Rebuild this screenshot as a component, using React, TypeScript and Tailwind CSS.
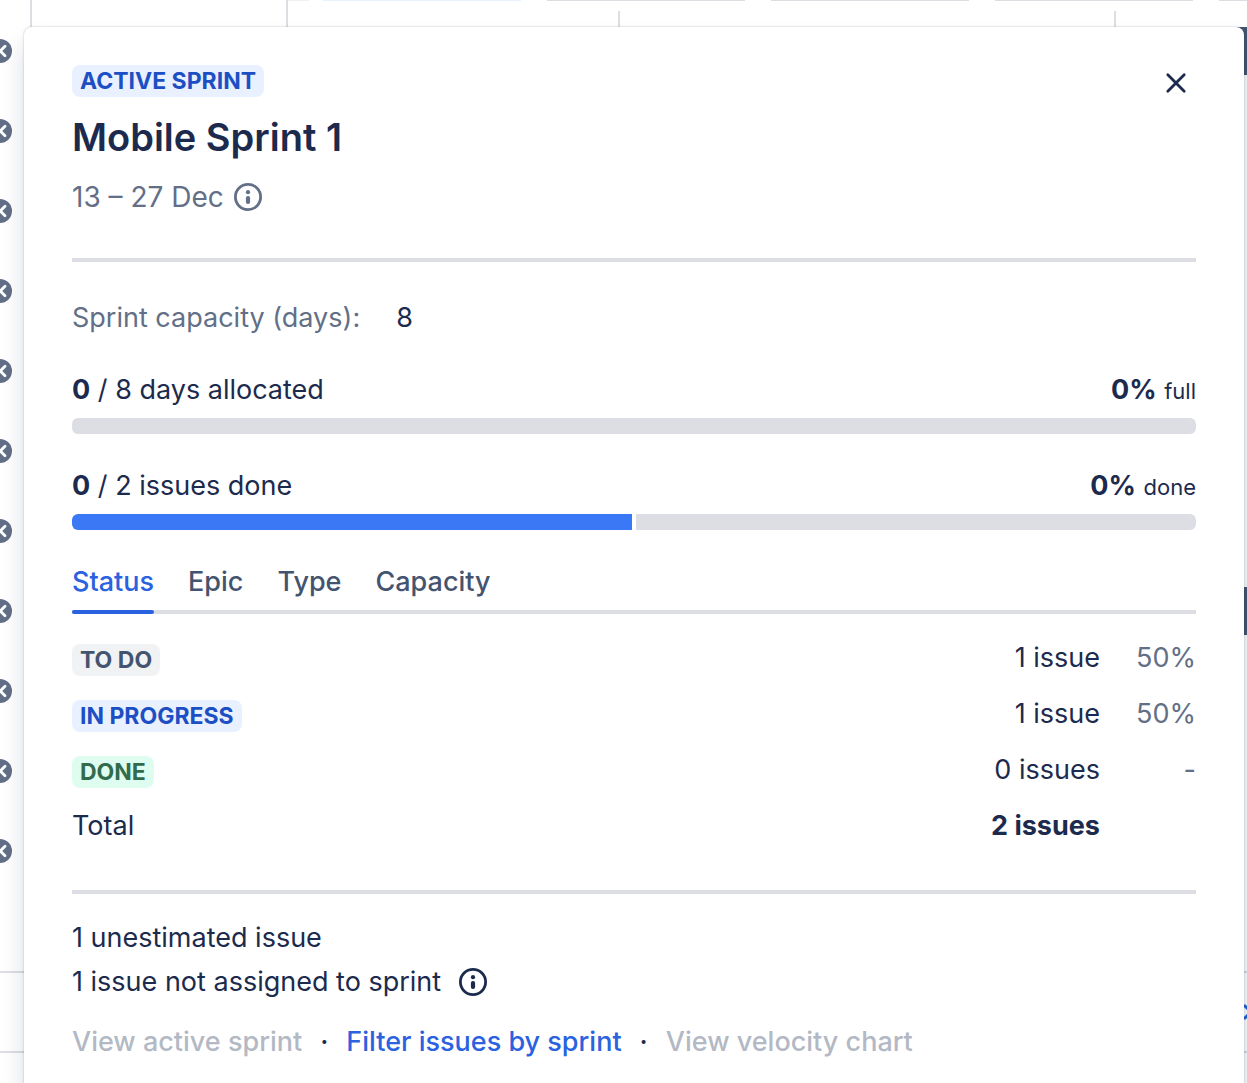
import { useState } from 'react';
import clsx from 'clsx';

type StatusRow = {
	label: string;
	badge: string;
	count: string;
	share: string;
};

const tabs = ['Status', 'Epic', 'Type', 'Capacity'];

const statuses: StatusRow[] = [
	{
		label: 'To do',
		badge: 'bg-[#f1f2f4] text-[#44546f]',
		count: '1 issue',
		share: '50%',
	},
	{
		label: 'In progress',
		badge: 'bg-[#e9f0ff] text-[#1d4fc4]',
		count: '1 issue',
		share: '50%',
	},
	{
		label: 'Done',
		badge: 'bg-[#dffcf0] text-[#316b4c]',
		count: '0 issues',
		share: '-',
	},
];

function Badge({ className, children }: { className: string; children: string }) {
	return (
		<span
			className={clsx(
				'inline-flex h-8 items-center rounded-lg px-2 text-[23px] font-bold uppercase',
				className
			)}>
			{children}
		</span>
	);
}

function InfoIcon() {
	return (
		<svg className="size-7 shrink-0" viewBox="0 0 28 28" fill="none" aria-hidden="true">
			<circle cx="14" cy="14" r="12.6" stroke="currentColor" strokeWidth="2.8" />
			<circle cx="14" cy="9.2" r="2.1" fill="currentColor" />
			<rect x="11.9" y="13" width="4.2" height="8" rx="2" fill="currentColor" />
		</svg>
	);
}

function ChevronBadge() {
	return (
		<svg className="-ml-3 size-6" viewBox="0 0 24 24" fill="none" aria-hidden="true">
			<circle cx="12" cy="12" r="12" fill="#626f86" />
			<path
				d="M17 7.3 12.3 12l4.7 4.7"
				stroke="#fff"
				strokeWidth="2.8"
				strokeLinecap="round"
				strokeLinejoin="round"
			/>
		</svg>
	);
}

// Plan timeline that stays visible around the dialog
function Timeline() {
	return (
		<div
			className="col-start-1 row-start-1 flex min-w-0 flex-col overflow-hidden"
			aria-hidden="true">
			<div className="flex h-[27px] shrink-0">
				<div className="w-8 border-r-2 border-[#dddee4]" />
				<div className="w-64 border-r-2 border-[#dddee4]" />
				<div className="flex flex-1 flex-col">
					<div className="flex h-px gap-[26px]">
						<div className="-mr-3 w-[21px] bg-[#f1f2f4]" />
						<div className="w-[198px] bg-[#e9f2ff]" />
						<div className="w-[198px] bg-[#dddee4]" />
						<div className="w-[198px] bg-[#dddee4]" />
						<div className="w-[198px] bg-[#dddee4]" />
						<div className="flex-1 bg-[#dddee4]" />
					</div>
					<div className="mt-[10px] flex flex-1">
						<div className="w-[332px] border-r-2 border-[#dddee4]" />
						<div className="w-[496px] border-r-2 border-[#dddee4]" />
					</div>
				</div>
			</div>
			<div className="flex flex-1 justify-between">
				<div className="flex w-6 flex-col">
					<div className="flex h-[944px] flex-col gap-14 pt-3">
						{Array.from({ length: 11 }, (_, i) => (
							<ChevronBadge key={i} />
						))}
					</div>
					<div className="h-20 border-t-2 border-[#dddee4]" />
					<div className="border-t-2 border-[#dddee4]" />
				</div>
				<div className="flex w-5 flex-col bg-[#fafbfc]">
					<div className="h-12 bg-[#44546f]" />
					<div className="mt-[512px] h-12 bg-[#44546f]" />
					<div className="mt-[336px] flex h-20 items-center justify-end border-t-2 border-[#d5d8de]">
						<svg className="h-4 w-[3px]" viewBox="0 0 3 16" fill="none">
							<path d="M0 2h1L4 5M0 14h1l3-3" stroke="#1d5fd6" strokeWidth="3" />
						</svg>
					</div>
					<div className="border-t-2 border-[#d5d8de]" />
				</div>
			</div>
		</div>
	);
}

export default function App() {
	const [activeTab, setActiveTab] = useState('Status');

	return (
		<div className="grid min-h-screen grid-cols-1 bg-white font-[Inter,sans-serif] text-[27px] leading-10 text-[#1c2b4d]">
			<Timeline />
			<section
				role="dialog"
				aria-labelledby="sprint-title"
				className="relative col-start-1 row-start-1 mt-[27px] mr-[3px] ml-6 rounded-t-lg bg-white px-12 pt-[38px] shadow-[0_0_2px_rgba(9,30,66,0.31),0_16px_24px_rgba(9,30,66,0.15)]">
				<header className="flex items-start justify-between">
					<div>
						<div className="flex">
							<Badge className="bg-[#e9f0ff] text-[#1d4fc4]">Active sprint</Badge>
						</div>
						<h1 id="sprint-title" className="mt-4 text-[38px] leading-12 font-semibold">
							Mobile Sprint 1
						</h1>
						<p className="mt-4 flex items-center gap-[10px] text-[28px] leading-10 text-[#626f86]">
							13 – 27 Dec
							<InfoIcon />
						</p>
					</div>
					<button type="button" aria-label="Close" className="-mt-0.5 flex size-10 items-center justify-center">
						<svg className="size-6" viewBox="0 0 24 24" fill="none">
							<path
								d="m3.8 3.8 16.4 16.4M20.2 3.8 3.8 20.2"
								stroke="currentColor"
								strokeWidth="2.8"
								strokeLinecap="round"
							/>
						</svg>
					</button>
				</header>

				<hr className="mt-[41px] border-t-4 border-[#dddee4]" />

				<p className="mt-9 flex gap-9">
					<span className="text-[#626f86]">Sprint capacity (days):</span>
					<span>8</span>
				</p>

				<div className="mt-8 flex h-10 items-baseline justify-between">
					<p>
						<b>0</b> / 8 days allocated
					</p>
					<p>
						<b>0%</b> <span className="text-[22px]">full</span>
					</p>
				</div>
				<div className="mt-2 h-4 rounded-md bg-[#dddee4]" />

				<div className="mt-8 flex h-10 items-baseline justify-between">
					<p>
						<b>0</b> / 2 issues done
					</p>
					<p>
						<b>0%</b> <span className="text-[22px]">done</span>
					</p>
				</div>
				<div className="mt-2 flex h-4 gap-1 overflow-hidden rounded-md">
					<div className="flex-1 bg-[#3b78f5]" />
					<div className="flex-1 bg-[#dddee4]" />
				</div>

				<div role="tablist" className="mt-8 flex gap-[34px] shadow-[inset_0_-4px_#dddee4]">
					{tabs.map((tab) => (
						<button
							key={tab}
							type="button"
							role="tab"
							aria-selected={tab === activeTab}
							onClick={() => setActiveTab(tab)}
							className={clsx(
								'flex flex-col font-medium',
								tab === activeTab ? 'text-[#2a62df]' : 'text-[#44546f]'
							)}>
							{tab}
							<span
								className={clsx(
									'mt-2 h-1 w-full rounded-sm',
									tab === activeTab && 'bg-[#2a62df]'
								)}
							/>
						</button>
					))}
				</div>

				<table className="mt-4 w-full">
					<tbody>
						{statuses.map((s) => (
							<tr key={s.label} className="h-14">
								<th scope="row" className="p-0 text-left">
									<div className="flex pt-1">
										<Badge className={s.badge}>{s.label}</Badge>
									</div>
								</th>
								<td className="p-0 text-right">{s.count}</td>
								<td className="w-24 p-0 text-right text-[#626f86]">{s.share}</td>
							</tr>
						))}
						<tr className="h-14">
							<th scope="row" className="p-0 text-left font-normal">
								Total
							</th>
							<td className="p-0 text-right font-bold">2 issues</td>
							<td />
						</tr>
					</tbody>
				</table>

				<hr className="mt-9 border-t-4 border-[#dddee4]" />

				<p className="mt-6">1 unestimated issue</p>
				<p className="mt-1 flex items-center gap-[18px]">
					1 issue not assigned to sprint
					<InfoIcon />
				</p>

				<footer className="mt-5 flex gap-[18px] pb-5 font-medium">
					<button type="button" disabled className="text-[#b3b9c4]">
						View active sprint
					</button>
					<span>·</span>
					<a href="#filter" className="text-[#2a62df]">
						Filter issues by sprint
					</a>
					<span>·</span>
					<button type="button" disabled className="text-[#b3b9c4]">
						View velocity chart
					</button>
				</footer>
			</section>
		</div>
	);
}
